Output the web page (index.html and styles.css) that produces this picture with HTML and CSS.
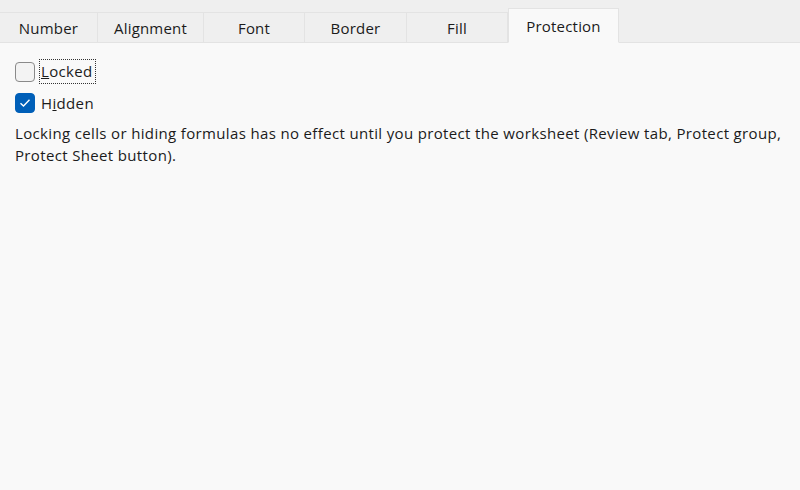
FILE: index.html
```html
<!DOCTYPE html>
<html lang="en">

<head>
    <meta charset="UTF-8">
    <title>Format Cells - Protection</title>
    <link rel="stylesheet" href="styles.css">
</head>

<body>
    <div class="tabs">
        <div class="tab">Number</div>
        <div class="tab">Alignment</div>
        <div class="tab">Font</div>
        <div class="tab">Border</div>
        <div class="tab">Fill</div>
        <div class="tab active">Protection</div>
    </div>

    <div class="panel">
        <label class="check">
            <span class="box"></span>
            <span class="focus"><u>L</u>ocked</span>
        </label>
        <label class="check">
            <span class="box on">
                <svg width="12" height="10" viewBox="0 0 12 10">
                    <path d="M1.5 5.2 L4.5 8 L10.5 1.8" fill="none" stroke="#fff" stroke-width="1.4" />
                </svg>
            </span>
            <span>H<u>i</u>dden</span>
        </label>
        <p class="note">Locking cells or hiding formulas has no effect until you protect the worksheet (Review tab, Protect group, Protect Sheet button).</p>
    </div>
</body>

</html>
```

FILE: styles.css
```css
* {
    margin: 0;
    padding: 0;
    box-sizing: border-box;
}

body {
    font-family: "Open Sans", "Noto Sans", sans-serif;
    font-size: 15px;
    letter-spacing: 0.35px;
    color: #1b1b1b;
    background: #f9f9f9;
    width: 800px;
    height: 490px;
    overflow: hidden;
}

.tabs {
    display: flex;
    align-items: flex-end;
    height: 43px;
    background: #efefef;
    border-bottom: 1px solid #e3e3e3;
}

.tab {
    height: 31px;
    border-top: 1px solid #e3e3e3;
    border-right: 1px solid #e3e3e3;
    display: flex;
    align-items: center;
    justify-content: center;
    color: #1b1b1b;
    margin-bottom: -1px;
    padding-bottom: 1px;
    letter-spacing: 0.2px;
}

.tab:nth-child(1) { width: 98px; }
.tab:nth-child(2) { width: 106px; }
.tab:nth-child(3) { width: 101px; }
.tab:nth-child(4) { width: 102px; }
.tab:nth-child(5) { width: 101px; }

.tab.active {
    width: 111px;
    height: 35px;
    background: #f9f9f9;
    border-left: 1px solid #e3e3e3;
    border-bottom: 1px solid #f9f9f9;
    padding-bottom: 0;
}

.panel {
    padding: 13px 15px 0 15px;
}

.check {
    display: flex;
    align-items: center;
    gap: 6px;
    height: 31px;
}

.box {
    width: 20px;
    height: 20px;
    border: 1px solid #8a8a8a;
    border-radius: 4px;
    background: #f3f3f3;
    display: flex;
    align-items: center;
    justify-content: center;
}

.box.on {
    background: #005fb8;
    border-color: #005fb8;
}

.focus {
    border: 1px dotted #333;
    padding: 1px 2px 2px 1px;
    margin-left: -2px;
}

.note {
    margin-top: 4px;
    line-height: 22px;
}
```
